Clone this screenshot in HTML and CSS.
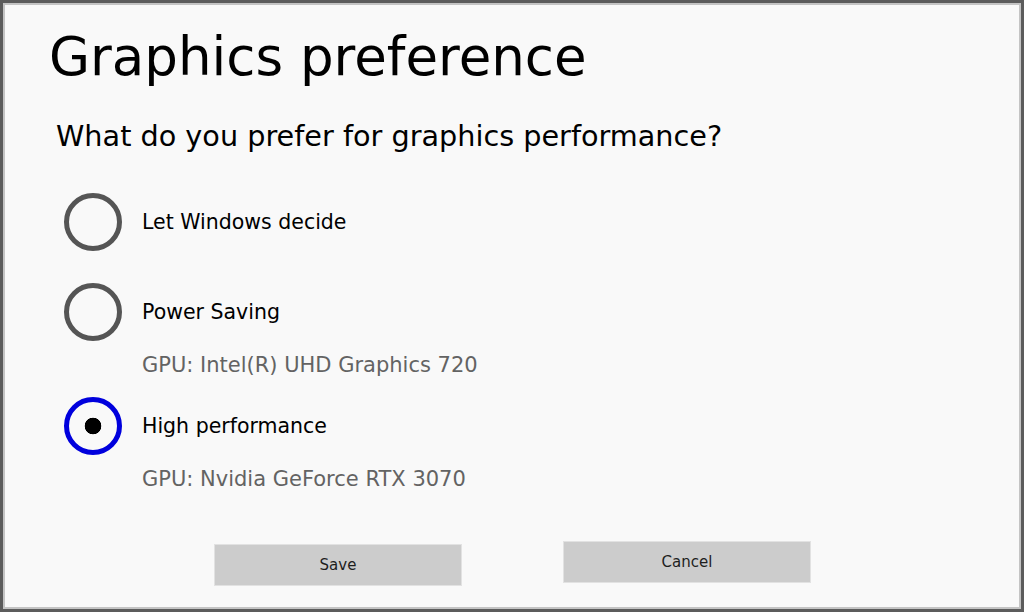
FILE: index.html
```html
<!DOCTYPE html>
<html lang="en">
<head>
    <meta charset="UTF-8">
    <meta name="viewport" content="width=device-width, initial-scale=1.0">
    <title>Graphics preference</title>
    <link rel="stylesheet" href="styles.css">
</head>
<body>

<div class="window">
    <h1 class="title">Graphics preference</h1>
    <p class="question">What do you prefer for graphics performance?</p>

    <form class="options">
        <label class="option option-first">
            <input type="radio" name="gpu" value="auto">
            <span class="option-label">Let Windows decide</span>
        </label>
        <label class="option">
            <input type="radio" name="gpu" value="power">
            <span class="option-label">Power Saving</span>
            <span class="gpu-name">GPU: Intel(R) UHD Graphics 720</span>
        </label>
        <label class="option">
            <input type="radio" name="gpu" value="high" checked>
            <span class="option-label">High performance</span>
            <span class="gpu-name">GPU: Nvidia GeForce RTX 3070</span>
        </label>
    </form>

    <div class="buttons">
        <button type="button" class="btn btn-save">Save</button>
        <button type="button" class="btn btn-cancel">Cancel</button>
    </div>
</div>

</body>
</html>
```

FILE: styles.css
```css
body {
    margin: 0;
    padding: 0;
    font-family: "DejaVu Sans", Verdana, sans-serif;
    color: #000;
}

.window {
    box-sizing: border-box;
    width: 1024px;
    height: 612px;
    border: 3px solid #5c5c5c;
    box-shadow: inset 0 0 0 2px #c4c4c4;
    background-color: #f9f9f9;
    padding: 23px 0 0 0;
}

.title {
    margin: 0 0 0 46px;
    font-size: 53px;
    font-weight: normal;
    line-height: 62px;
}

.question {
    margin: 31px 0 0 53px;
    font-size: 28.7px;
    line-height: 34px;
}

.options {
    display: flex;
    flex-direction: column;
    gap: 20px;
    margin: 40px 0 0 61px;
}

.option {
    display: grid;
    grid-template-columns: 58px 1fr;
    column-gap: 20px;
    align-items: center;
    cursor: pointer;
}

.option-first {
    margin-bottom: 12px;
}

.option input[type="radio"] {
    appearance: none;
    -webkit-appearance: none;
    box-sizing: border-box;
    width: 58px;
    height: 58px;
    margin: 0;
    border: 5px solid #555;
    border-radius: 50%;
    background-color: transparent;
    cursor: pointer;
}

.option input[type="radio"]:checked {
    border-color: #0000dd;
    background: radial-gradient(circle, #000 0 8px, transparent 8.6px);
}

.option-label {
    font-size: 20.5px;
    line-height: 24px;
}

.gpu-name {
    grid-column: 2;
    margin-top: 12px;
    font-size: 21px;
    line-height: 24px;
    color: #636363;
}

.buttons {
    display: flex;
    align-items: flex-start;
    gap: 101px;
    margin: 50px 0 0 211px;
}

.btn {
    width: 248px;
    height: 42px;
    border: 1px solid #e2e2e2;
    background-color: #cccccc;
    font-family: "DejaVu Sans", sans-serif;
    font-size: 15px;
    color: #1e1e1e;
    cursor: pointer;
}

.btn-save {
    margin-top: 3px;
}
```
